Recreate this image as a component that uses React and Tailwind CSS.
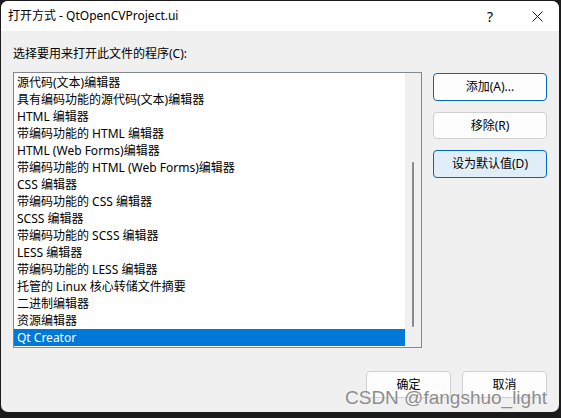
import React from "react";

const items = [
  "源代码(文本)编辑器",
  "具有编码功能的源代码(文本)编辑器",
  "HTML 编辑器",
  "带编码功能的 HTML 编辑器",
  "HTML (Web Forms)编辑器",
  "带编码功能的 HTML (Web Forms)编辑器",
  "CSS 编辑器",
  "带编码功能的 CSS 编辑器",
  "SCSS 编辑器",
  "带编码功能的 SCSS 编辑器",
  "LESS 编辑器",
  "带编码功能的 LESS 编辑器",
  "托管的 Linux 核心转储文件摘要",
  "二进制编辑器",
  "资源编辑器",
  "Qt Creator",
];

const font = "font-['Segoe_UI','Noto_Sans','Noto_Sans_CJK_SC',sans-serif]";
const btn =
  "flex items-center justify-center rounded-[4px] border text-[12px] text-black";

const App = () => {
  return (
    <div className={`relative w-[561px] h-[418px] bg-[#1b1b1b] p-[1px] ${font}`}>
      <div className="flex flex-col w-[558px] h-[411px] rounded-[7px] overflow-hidden bg-[#f0f0f0]">
        {/* title bar */}
        <div className="flex items-center h-[30px] bg-white pl-[7px] text-[12px] text-black">
          <span>打开方式 - QtOpenCVProject.ui</span>
          <span className="ml-auto w-[12px] text-center text-[14px]">?</span>
          <svg className="ml-[36px] mr-[16px]" width="11" height="11" viewBox="0 0 11 11">
            <path d="M0.5 0.5 L10.5 10.5 M10.5 0.5 L0.5 10.5" stroke="#1a1a1a" strokeWidth="1" />
          </svg>
        </div>

        <div className="flex flex-col flex-1 pt-[14px] pl-[12px] pr-[12px]">
          <div className="h-[18px] leading-[18px] text-[12px] text-black">
            选择要用来打开此文件的程序(C):
          </div>

          <div className="flex mt-[9px]">
            {/* list box */}
            <div className="flex w-[409px] h-[276px] border border-[#828790] bg-white">
              <div className="flex flex-col w-[391px] pt-[1px]">
                {items.map((item, i) => (
                  <div
                    key={item}
                    className={`h-[17px] leading-[17px] pl-[3px] text-[12px] whitespace-nowrap ${
                      i === items.length - 1 ? "bg-[#0078d7] text-white" : "text-black"
                    }`}
                  >
                    {item}
                  </div>
                ))}
              </div>
              <div className="flex justify-center w-[16px] bg-[#f0f0f0] pt-[89px]">
                <div className="w-[2px] h-[165px] bg-[#8a8a8a] rounded-full" />
              </div>
            </div>

            {/* side buttons */}
            <div className="flex flex-col gap-[11px] ml-[11px] mt-[1px]">
              <button className={`${btn} w-[114px] h-[28px] bg-[#fdfdfd] border-[#0067c0]`}>
                添加(A)...
              </button>
              <button className={`${btn} w-[114px] h-[27px] bg-[#fdfdfd] border-[#d0d0d0]`}>
                移除(R)
              </button>
              <button className={`${btn} w-[114px] h-[28px] bg-[#e0eef9] border-[#0067c0]`}>
                设为默认值(D)
              </button>
            </div>
          </div>

          {/* footer */}
          <div className="flex justify-end gap-[11px] mt-[23px]">
            <button className={`${btn} w-[85px] h-[27px] bg-[#fdfdfd] border-[#d0d0d0]`}>
              确定
            </button>
            <button className={`${btn} w-[85px] h-[27px] bg-[#fdfdfd] border-[#d0d0d0]`}>
              取消
            </button>
          </div>
        </div>
      </div>

      {/* watermark */}
      <div className="absolute left-[345px] top-[386px] text-[19px] leading-[24px] text-[#8c8c8c] font-['Liberation_Sans',sans-serif] [text-shadow:0_0_2px_#ffffff]">
        CSDN @fangshuo_light
      </div>
    </div>
  );
};

export default App;
